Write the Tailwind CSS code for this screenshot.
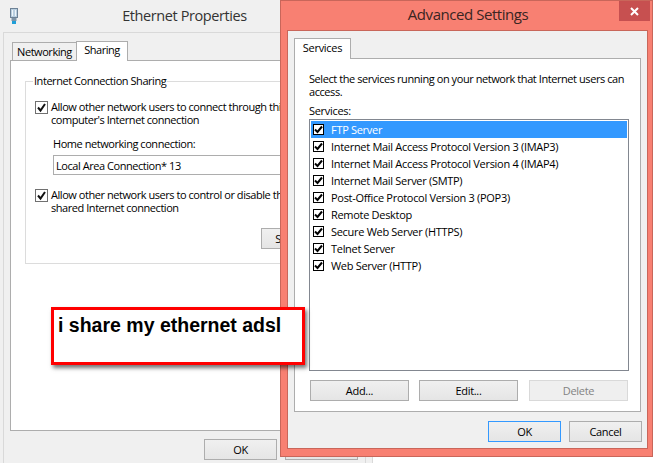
<!DOCTYPE html>
<html lang="en">
<head>
  <meta charset="UTF-8" />
  <title>Advanced Settings</title>
  <script src="https://cdn.jsdelivr.net/npm/@tailwindcss/browser@4"></script>
</head>
<body class="relative w-[653px] h-[463px] overflow-hidden bg-white font-['Open_Sans',sans-serif] text-[11px] leading-[13px] tracking-[-0.3px] text-black">

  <!-- Ethernet Properties window -->
  <div class="absolute left-0 top-0 w-[373px] h-[463px] bg-[#f0f0f0] border-r border-[#d9d9d9] flex flex-col tracking-[-0.45px]">
    <div class="h-[32px] relative shrink-0 flex justify-center items-center pb-[1px]">
      <svg class="absolute left-[10px] top-[8px]" width="8" height="16" viewBox="0 0 8 16">
        <rect x="0.5" y="0.5" width="7" height="9" fill="#b9cfe0" stroke="#6d8296"/>
        <rect x="2" y="2" width="1" height="6" fill="#eef5fa"/>
        <rect x="5" y="2" width="1" height="6" fill="#eef5fa"/>
        <rect x="1.5" y="10" width="5" height="3" fill="#7d93a6"/>
        <rect x="2" y="13" width="4" height="3" fill="#1f9fd8"/>
      </svg>
      <span class="text-[14.5px] text-[#333] tracking-[-0.4px] ml-[-3px]">Ethernet Properties</span>
    </div>
    <div class="border-l border-t border-r border-[#d9d9d9] ml-[3px] w-[363px] flex-1 pl-[6px] pt-[7px]">
      <div class="flex items-end h-[20px] ml-[2px]">
        <div class="w-[65px] h-[18px] bg-[#f0f0f0] border border-b-0 border-[#adadad] flex justify-center items-center pb-[1px]">Networking</div>
        <div class="w-[52px] h-[20px] bg-white border border-b-0 border-[#adadad] flex justify-center items-center relative -ml-[1px] z-10 -mb-[1px] pb-[4px]">Sharing</div>
      </div>
      <div class="w-[355px] h-[371px] bg-white border border-[#adadad] pt-[20px] pl-[14px]">
        <div class="relative w-[330px] h-[183px] border border-[#dcdcdc] pl-[9px] pt-[18px]">
          <span class="absolute left-[7px] -top-[8px] bg-white px-[1px]">Internet Connection Sharing</span>
          <div class="flex gap-[3px]">
            <span class="w-[13px] h-[13px] border border-[#707070] flex items-center justify-center shrink-0 mt-[1px]">
              <svg width="11" height="11" viewBox="0 0 11 11"><path d="M2 5.5 L4.5 8.5 L9 2" fill="none" stroke="#111" stroke-width="2"/></svg>
            </span>
            <div class="whitespace-nowrap">Allow other network users to connect through this<br/>computer's Internet connection</div>
          </div>
          <div class="ml-[18px] mt-[11px] whitespace-nowrap">Home networking connection:</div>
          <div class="ml-[18px] mt-[5px] h-[20px] w-[300px] border border-[#adadad] flex items-center pl-[2px] whitespace-nowrap">Local Area Connection* 13</div>
          <div class="flex gap-[3px] mt-[13px]">
            <span class="w-[13px] h-[13px] border border-[#707070] flex items-center justify-center shrink-0 mt-[1px]">
              <svg width="11" height="11" viewBox="0 0 11 11"><path d="M2 5.5 L4.5 8.5 L9 2" fill="none" stroke="#111" stroke-width="2"/></svg>
            </span>
            <div class="whitespace-nowrap">Allow other network users to control or disable the<br/>shared Internet connection</div>
          </div>
          <div class="ml-[226px] mt-[14px] w-[73px] h-[21px] bg-linear-to-b from-[#f0f0f0] to-[#e5e5e5] border border-[#adadad] flex items-center justify-center">Settings...</div>
        </div>
      </div>
      <div class="flex gap-[8px] ml-[194px] mt-[8px]">
        <div class="w-[73px] h-[21px] bg-linear-to-b from-[#f0f0f0] to-[#e5e5e5] border border-[#adadad] flex items-center justify-center">OK</div>
        <div class="w-[73px] h-[21px] bg-linear-to-b from-[#f0f0f0] to-[#e5e5e5] border border-[#adadad]"></div>
      </div>
    </div>
  </div>

  <!-- Advanced Settings dialog -->
  <div class="absolute left-[280px] top-0 w-[373px] h-[457px] bg-[#f88072] border border-[#c9665a] flex flex-col">
    <div class="h-[29px] shrink-0 relative flex justify-center items-center pl-[3px] pb-[2px]">
      <span class="text-[15px] text-[#3a2522] tracking-[-0.45px]">Advanced Settings</span>
      <div class="absolute left-[338px] top-0 w-[31px] h-[20px] bg-[#c75050] flex items-center justify-center">
        <svg width="9" height="9" viewBox="0 0 9 9"><path d="M1 1 L8 8 M8 1 L1 8" stroke="#fff" stroke-width="2"/></svg>
      </div>
    </div>
    <div class="ml-[6px] w-[361px] h-[419px] bg-[#f0f0f0] border border-[#c9665a] pl-[6px] pt-[7px]">
      <div class="w-[57px] h-[21px] bg-white border border-b-0 border-[#adadad] flex justify-center items-center relative z-10 pb-[3px]">Services</div>
      <div class="w-[347px] h-[354px] bg-white border border-[#adadad] -mt-[1px] pl-[14px] pt-[13px]">
        <p class="whitespace-nowrap tracking-[-0.43px]">Select the services running on your network that Internet users can<br/>access.</p>
        <p class="mt-[6px]">Services:</p>
        <ul class="mt-[2px] w-[320px] h-[252px] border border-[#828790] p-[1px]">
          <li class="h-[17px] flex items-center gap-[7px] pl-[2px] bg-[#3399ff] text-white">
            <span class="w-[11px] h-[11px] bg-white border border-black flex items-center justify-center"><svg width="9" height="9" viewBox="0 0 9 9"><path d="M1 4.5 L3.5 7 L8 1.5" fill="none" stroke="#000" stroke-width="2"/></svg></span>FTP Server</li>
          <li class="h-[17px] flex items-center gap-[7px] pl-[2px]">
            <span class="w-[11px] h-[11px] bg-white border border-black flex items-center justify-center"><svg width="9" height="9" viewBox="0 0 9 9"><path d="M1 4.5 L3.5 7 L8 1.5" fill="none" stroke="#000" stroke-width="2"/></svg></span>Internet Mail Access Protocol Version 3 (IMAP3)</li>
          <li class="h-[17px] flex items-center gap-[7px] pl-[2px]">
            <span class="w-[11px] h-[11px] bg-white border border-black flex items-center justify-center"><svg width="9" height="9" viewBox="0 0 9 9"><path d="M1 4.5 L3.5 7 L8 1.5" fill="none" stroke="#000" stroke-width="2"/></svg></span>Internet Mail Access Protocol Version 4 (IMAP4)</li>
          <li class="h-[17px] flex items-center gap-[7px] pl-[2px]">
            <span class="w-[11px] h-[11px] bg-white border border-black flex items-center justify-center"><svg width="9" height="9" viewBox="0 0 9 9"><path d="M1 4.5 L3.5 7 L8 1.5" fill="none" stroke="#000" stroke-width="2"/></svg></span>Internet Mail Server (SMTP)</li>
          <li class="h-[17px] flex items-center gap-[7px] pl-[2px]">
            <span class="w-[11px] h-[11px] bg-white border border-black flex items-center justify-center"><svg width="9" height="9" viewBox="0 0 9 9"><path d="M1 4.5 L3.5 7 L8 1.5" fill="none" stroke="#000" stroke-width="2"/></svg></span>Post-Office Protocol Version 3 (POP3)</li>
          <li class="h-[17px] flex items-center gap-[7px] pl-[2px]">
            <span class="w-[11px] h-[11px] bg-white border border-black flex items-center justify-center"><svg width="9" height="9" viewBox="0 0 9 9"><path d="M1 4.5 L3.5 7 L8 1.5" fill="none" stroke="#000" stroke-width="2"/></svg></span>Remote Desktop</li>
          <li class="h-[17px] flex items-center gap-[7px] pl-[2px]">
            <span class="w-[11px] h-[11px] bg-white border border-black flex items-center justify-center"><svg width="9" height="9" viewBox="0 0 9 9"><path d="M1 4.5 L3.5 7 L8 1.5" fill="none" stroke="#000" stroke-width="2"/></svg></span>Secure Web Server (HTTPS)</li>
          <li class="h-[17px] flex items-center gap-[7px] pl-[2px]">
            <span class="w-[11px] h-[11px] bg-white border border-black flex items-center justify-center"><svg width="9" height="9" viewBox="0 0 9 9"><path d="M1 4.5 L3.5 7 L8 1.5" fill="none" stroke="#000" stroke-width="2"/></svg></span>Telnet Server</li>
          <li class="h-[17px] flex items-center gap-[7px] pl-[2px]">
            <span class="w-[11px] h-[11px] bg-white border border-black flex items-center justify-center"><svg width="9" height="9" viewBox="0 0 9 9"><path d="M1 4.5 L3.5 7 L8 1.5" fill="none" stroke="#000" stroke-width="2"/></svg></span>Web Server (HTTP)</li>
        </ul>
        <div class="flex gap-[10px] mt-[9px] ml-[1px]">
          <div class="w-[99px] h-[21px] bg-linear-to-b from-[#f0f0f0] to-[#e5e5e5] border border-[#adadad] flex items-center justify-center">Add...</div>
          <div class="w-[99px] h-[21px] bg-linear-to-b from-[#f0f0f0] to-[#e5e5e5] border border-[#adadad] flex items-center justify-center">Edit...</div>
          <div class="ml-[1px] w-[99px] h-[21px] bg-[#efefef] border border-[#d9d9d9] text-[#838383] flex items-center justify-center">Delete</div>
        </div>
      </div>
      <div class="flex justify-end gap-[8px] mt-[9px] pr-[5px]">
        <div class="w-[73px] h-[21px] bg-linear-to-b from-[#f0f0f0] to-[#e5e5e5] border border-[#3399ff] flex items-center justify-center">OK</div>
        <div class="w-[73px] h-[21px] bg-linear-to-b from-[#f0f0f0] to-[#e5e5e5] border border-[#adadad] flex items-center justify-center">Cancel</div>
      </div>
    </div>
  </div>

  <!-- red callout -->
  <div class="absolute left-[51px] top-[307px] w-[254px] h-[58px] bg-white border-[3px] border-[#ff0000] shadow-[2px_3px_4px_rgba(0,0,0,0.55)] pl-[4px] pt-[3px] font-['Liberation_Sans',sans-serif] font-bold text-[19.5px] leading-[24px] tracking-normal whitespace-nowrap">i share my ethernet adsl</div>
</body>
</html>
